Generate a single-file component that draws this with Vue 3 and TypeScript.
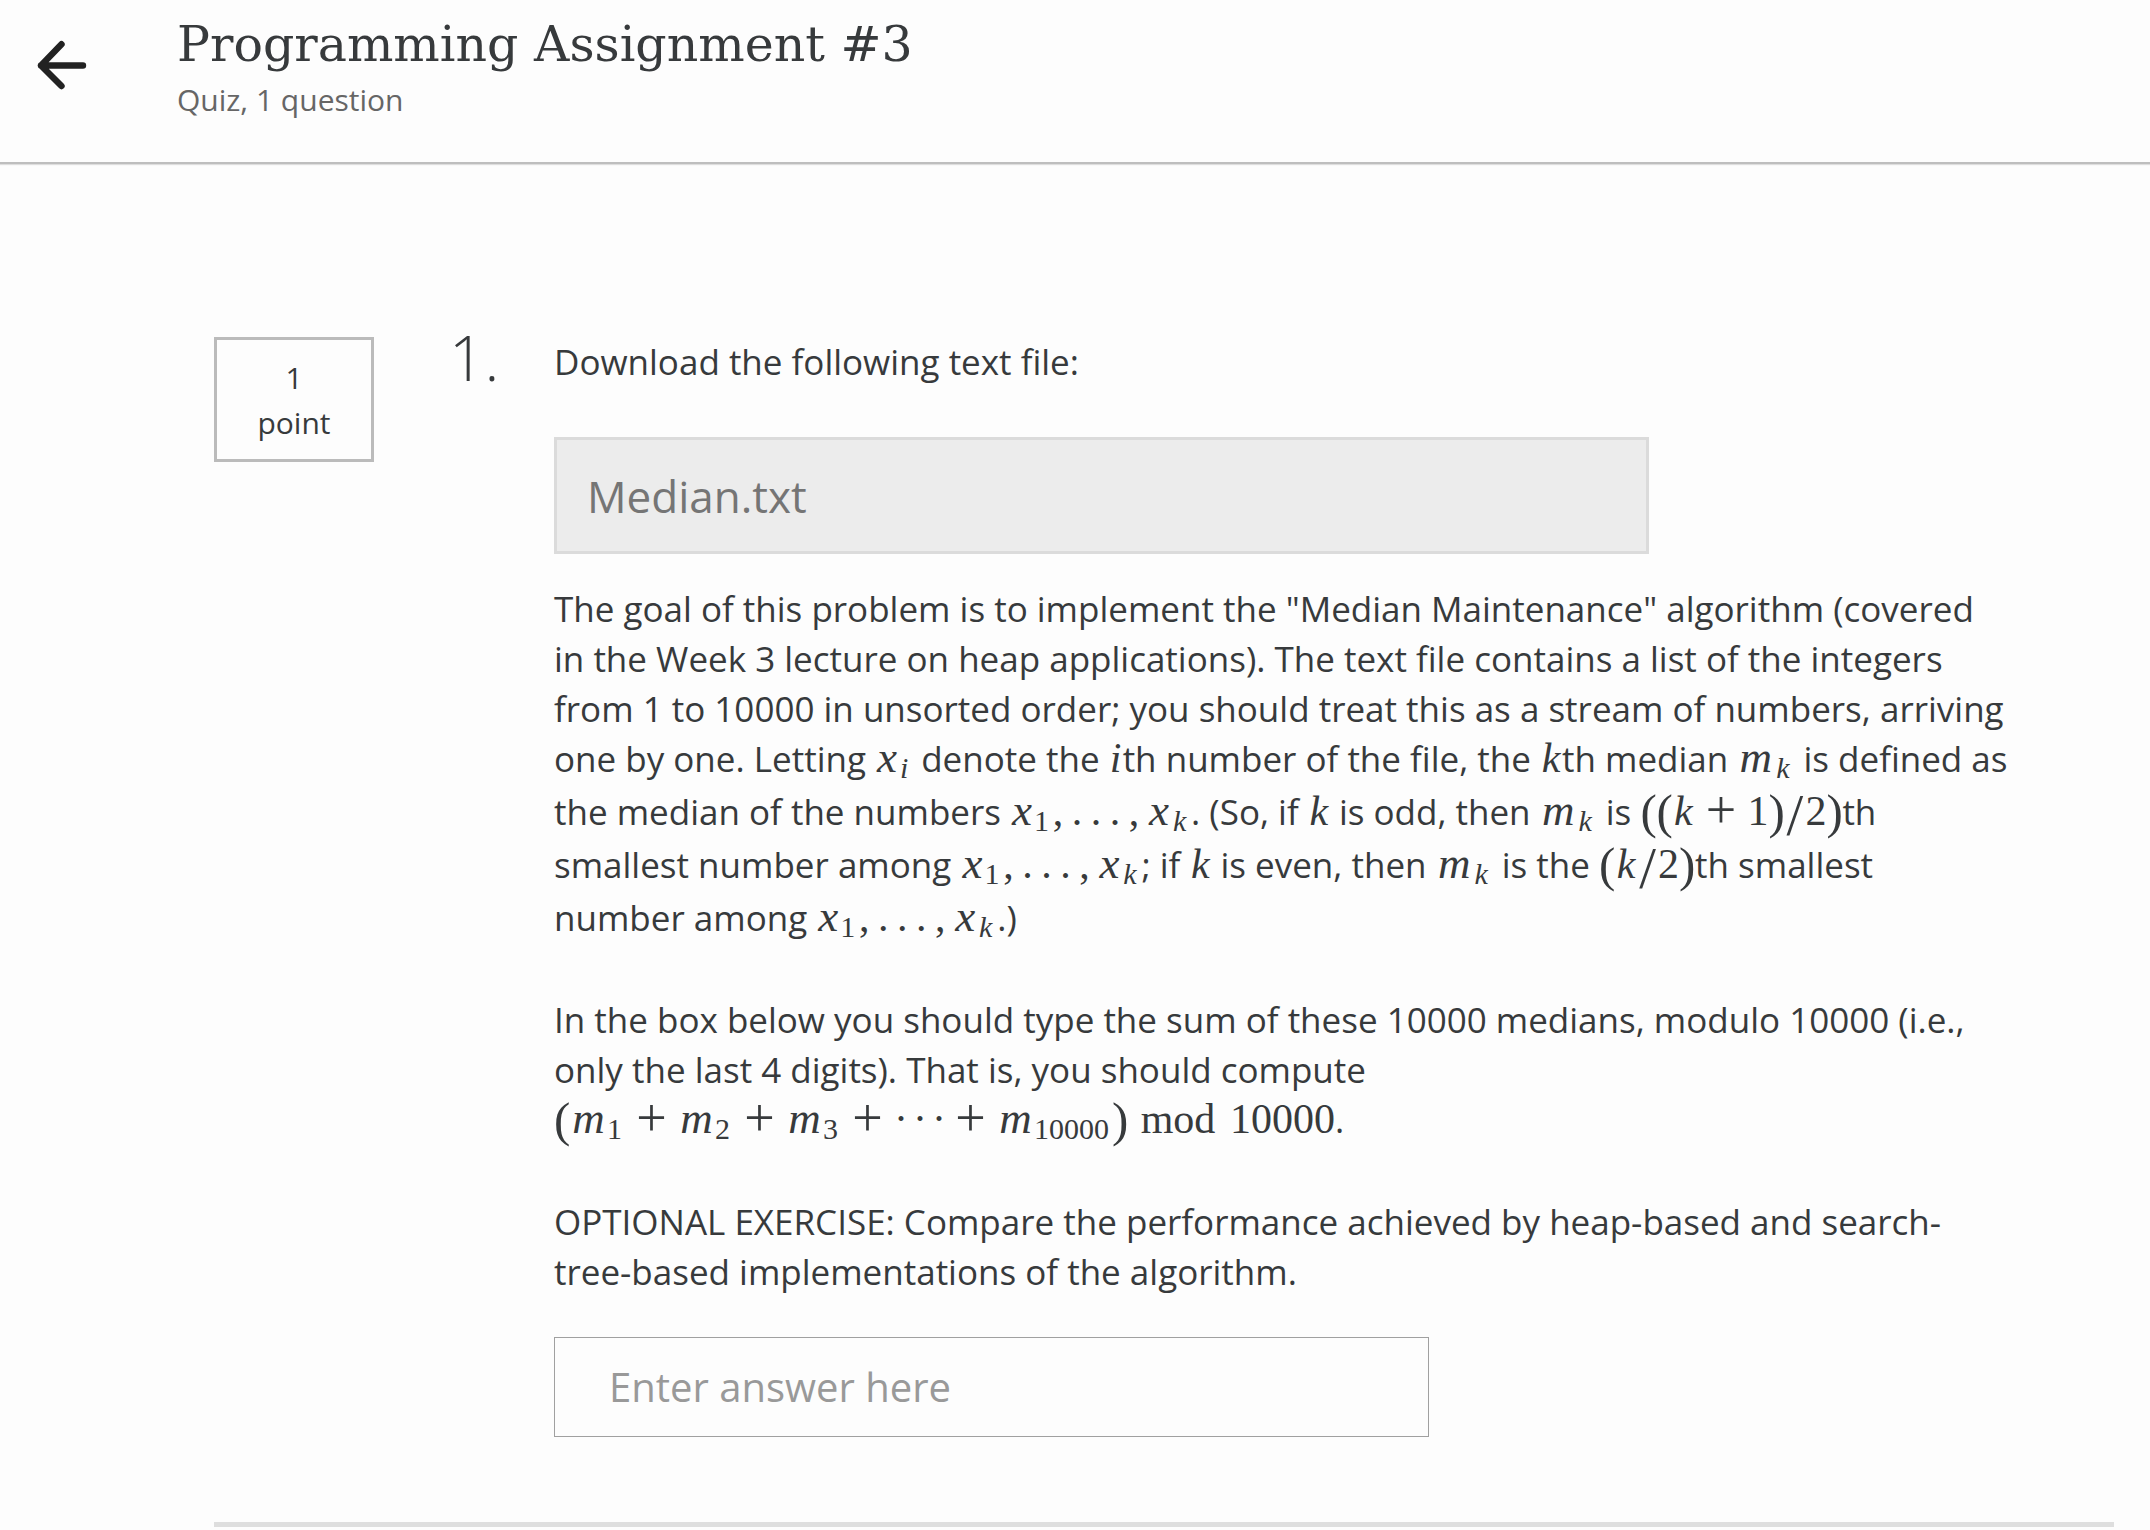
<script setup lang="ts">
import { ref } from 'vue'

interface Atom {
  text: string
  kind: string
  sub?: string
}
type Segment = string | Atom[]
interface Line {
  tall?: boolean
  parts: Segment[]
}

const kinds: Record<string, string> = {
  x: 'var x',
  m: 'var m',
  k: 'var k',
  i: 'var i',
  '+': 'op',
  ',': 'punct',
  '.': 'punct',
  '·': 'dot',
  '(': 'paren',
  ')': 'paren',
  '/': 'slash',
  mod: 'word',
}

/* Splits a formula such as "x_1,...,x_k" into atoms with optional subscripts. */
function math(source: string): Atom[] {
  return [...source.matchAll(/(mod|\d+|.)(?:_(\d+|[a-z]))?/gu)].map((match) => ({
    text: match[1],
    kind: kinds[match[1]] ?? 'num',
    sub: match[2],
  }))
}

const paragraphs: Line[][] = [
  [
    { parts: ['The goal of this problem is to implement the "Median Maintenance" algorithm (covered'] },
    { parts: ['in the Week 3 lecture on heap applications). The text file contains a list of the integers'] },
    { parts: ['from 1 to 10000 in unsorted order; you should treat this as a stream of numbers, arriving'] },
    {
      parts: [
        'one by one. Letting ', math('x_i'), ' denote the ', math('i'), 'th number of the file, the ',
        math('k'), 'th median ', math('m_k'), ' is defined as',
      ],
    },
    {
      tall: true,
      parts: [
        'the median of the numbers ', math('x_1,...,x_k'), '. (So, if ', math('k'), ' is odd, then ',
        math('m_k'), ' is ', math('((k+1)/2)'), 'th',
      ],
    },
    {
      tall: true,
      parts: [
        'smallest number among ', math('x_1,...,x_k'), '; if ', math('k'), ' is even, then ',
        math('m_k'), ' is the ', math('(k/2)'), 'th smallest',
      ],
    },
    { tall: true, parts: ['number among ', math('x_1,...,x_k'), '.)'] },
  ],
  [
    { parts: ['In the box below you should type the sum of these 10000 medians, modulo 10000 (i.e.,'] },
    { parts: ['only the last 4 digits). That is, you should compute'] },
    { parts: [math('(m_1+m_2+m_3+···+m_10000)mod10000'), '.'] },
  ],
  [
    { parts: ['OPTIONAL EXERCISE: Compare the performance achieved by heap-based and search-'] },
    { parts: ['tree-based implementations of the algorithm.'] },
  ],
]

const answer = ref('')
</script>

<template>
  <div class="page">
    <header class="header">
      <button class="back" type="button" aria-label="Back">
        <svg width="52" height="52" viewBox="0 0 52 52" fill="none" stroke="#222" stroke-width="6.4" stroke-linecap="round" stroke-linejoin="round">
          <path d="M25.5 5.2 5 26.5 25.5 47M5 26.5H47" />
        </svg>
      </button>
      <div class="heading">
        <h1>Programming Assignment #3</h1>
        <p class="subtitle">Quiz, 1 question</p>
      </div>
    </header>

    <main class="main">
      <section class="question">
        <div class="points"><span>1</span><span>point</span></div>
        <div class="number">1.</div>
        <div class="content">
          <p class="text">Download the following text file:</p>
          <a class="file" href="#">Median.txt</a>
          <div class="prompt">
            <p v-for="(lines, p) in paragraphs" :key="p" class="text">
              <span v-for="(line, l) in lines" :key="l" class="line" :class="{ tall: line.tall }">
                <template v-for="(part, s) in line.parts" :key="s">
                  <template v-if="typeof part === 'string'">{{ part }}</template>
                  <span v-else class="math">
                    <template v-for="(atom, a) in part" :key="a">
                      <span :class="atom.kind">{{ atom.text }}</span>
                      <span v-if="atom.sub" class="sub" :class="kinds[atom.sub]">{{ atom.sub }}</span>
                    </template>
                  </span>
                </template>
              </span>
            </p>
          </div>
          <input v-model="answer" class="answer" type="text" placeholder="Enter answer here" aria-label="Answer" />
        </div>
      </section>
    </main>
  </div>
</template>

<style>
body {
  margin: 0;
  background: #fdfdfd;
}
</style>

<style scoped>
.page {
  color: #373a3c;
  font-family: "Open Sans", sans-serif;
}

h1,
p {
  margin: 0;
}

.header {
  display: flex;
  align-items: flex-start;
  padding: 13px 36px 40px;
  border-bottom: 2px solid #bebebe;
  box-shadow: 0 1px 1px #dedede;
}

.back {
  flex: none;
  width: 141px;
  margin-top: 26px;
  padding: 0;
  border: 0;
  background: none;
  text-align: left;
  cursor: pointer;
}

.back svg {
  display: block;
}

h1 {
  font: 400 49px/64px "DejaVu Serif", serif;
}

.subtitle {
  color: #666;
  font-size: 30px;
  line-height: 45px;
}

.main {
  padding: 173px 36px 0 214px;
}

.question {
  display: flex;
  align-items: flex-start;
  padding-bottom: 85px;
  border-bottom: 5px solid #dedede;
}

.points {
  display: flex;
  flex: none;
  flex-direction: column;
  box-sizing: border-box;
  width: 160px;
  padding: 15px 0 14px;
  border: 3px solid #bbb;
  font-size: 30px;
  line-height: 45px;
  text-align: center;
}

.number {
  flex: none;
  width: 105px;
  margin-left: 75px;
  font-size: 62px;
  font-weight: 300;
  line-height: 40px;
}

.content {
  flex: 1;
  min-width: 0;
}

.text {
  font-size: 35px;
  line-height: 50px;
}

.file {
  display: block;
  box-sizing: border-box;
  max-width: 1095px;
  margin: 50px 0 30px;
  padding: 25px 30px 24px;
  border: 3px solid #dbdbdb;
  background: #ececec;
  color: #757575;
  font-size: 44px;
  line-height: 62px;
  text-decoration: none;
}

.prompt {
  display: flex;
  flex-direction: column;
  gap: 52px;
}

.line {
  display: block;
}

.tall {
  padding-top: 3px;
}

.math {
  font-family: "Liberation Serif", serif;
  font-size: 42px;
  line-height: 0;
  white-space: nowrap;
}

.math span {
  display: inline-block;
  text-align: center;
}

.math .var {
  font-style: italic;
}

.math .x {
  width: 24px;
  font-size: 45px;
}

.math .m {
  width: 37px;
  font-size: 45px;
}

.math .k {
  width: 22px;
}

.math .i {
  width: 14px;
}

.math .op {
  width: 33px;
  margin: 0 10px;
  font-size: 54px;
  vertical-align: -3px;
}

.math .punct {
  width: 12px;
  margin-right: 7px;
}

.math .dot {
  width: 12px;
}

.math .dot + .dot {
  margin-left: 7px;
}

.math .paren {
  width: 16px;
  font-size: 49px;
  vertical-align: -3px;
}

.math .slash {
  width: 21px;
  font-size: 60px;
  vertical-align: -10px;
}

.math .word {
  width: 80px;
  margin: 0 12px 0 10px;
}

.math .sub {
  width: auto;
  min-width: 10px;
  margin-right: 3px;
  font-size: 30px;
  vertical-align: -6px;
}

.math .sub.k {
  width: 17px;
}

.answer {
  display: block;
  box-sizing: border-box;
  width: 100%;
  max-width: 875px;
  height: 100px;
  margin-top: 40px;
  padding: 0 54px 2px;
  border: 1px solid #a0a0a0;
  border-radius: 0;
  background: transparent;
  color: #373a3c;
  font: 400 40px "Open Sans", sans-serif;
}

.answer::placeholder {
  color: #999;
  opacity: 1;
}
</style>
